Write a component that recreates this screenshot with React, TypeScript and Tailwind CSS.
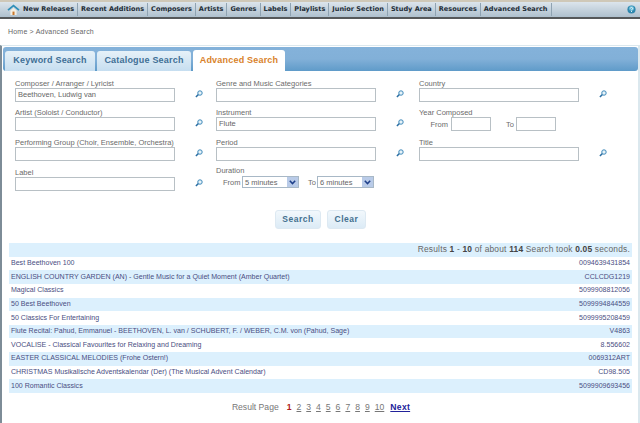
const NAV_ITEMS = [
  "New Releases",
  "Recent Additions",
  "Composers",
  "Artists",
  "Genres",
  "Labels",
  "Playlists",
  "Junior Section",
  "Study Area",
  "Resources",
  "Advanced Search",
];

const RESULTS = [
  ["Best Beethoven 100", "0094639431854"],
  ["ENGLISH COUNTRY GARDEN (AN) - Gentle Music for a Quiet Moment (Amber Quartet)", "CCLCDG1219"],
  ["Magical Classics", "5099908812056"],
  ["50 Best Beethoven", "5099994844559"],
  ["50 Classics For Entertaining", "5099995208459"],
  ["Flute Recital: Pahud, Emmanuel - BEETHOVEN, L. van / SCHUBERT, F. / WEBER, C.M. von (Pahud, Sage)", "V4863"],
  ["VOCALISE - Classical Favourites for Relaxing and Dreaming", "8.556602"],
  ["EASTER CLASSICAL MELODIES (Frohe Ostern!)", "0069312ART"],
  ["CHRISTMAS Musikalische Adventskalendar (Der) (The Musical Advent Calendar)", "CD98.505"],
  ["100 Romantic Classics", "5099909693456"],
];

const PAGES = ["2", "3", "4", "5", "6", "7", "8", "9", "10"];

const HomeIcon = () => (
  <svg width="13" height="12" viewBox="0 0 13 12" aria-hidden>
    <path d="M1 6.2 6.5 1.5 12 6.2" fill="none" stroke="#2f8fb8" strokeWidth="1.7" />
    <path d="M3.4 6.4 6.5 3.9 9.6 6.4V11H3.4Z" fill="#f4efe2" />
    <rect x="5.5" y="7.6" width="2" height="3.4" fill="#c9792e" />
  </svg>
);

const HelpIcon = () => (
  <svg width="9" height="9" viewBox="0 0 11 11" aria-hidden>
    <circle cx="5.5" cy="5.5" r="5" fill="#2d86ad" />
    <circle cx="5.5" cy="4" r="3.2" fill="#5fb4d2" />
    <path d="M4 4.2C4 2.6 7 2.6 7 4.1 7 5.2 5.5 5.1 5.5 6.4" fill="none" stroke="#fff" strokeWidth="1.1" />
    <rect x="5" y="7.3" width="1.1" height="1.2" fill="#fff" />
  </svg>
);

const LookupIcon = () => (
  <svg width="8" height="8" viewBox="0 0 9 9" className="mb-[2px] shrink-0" aria-hidden>
    <circle cx="5.6" cy="3.4" r="2.5" fill="#e8f3f8" stroke="#3a86b8" strokeWidth="1.1" />
    <path d="M3.7 5.2 1 7.9" stroke="#2a6ea3" strokeWidth="1.6" />
  </svg>
);

const Field = ({ label, value = "" }: { label: string; value?: string }) => (
  <div className="flex h-[29.7px] items-end">
    <div className="w-[160px] shrink-0">
      <div className="mb-[-1px] h-[11px] whitespace-nowrap text-[7.5px] leading-[11px] text-[#6b6b6b]">{label}</div>
      <div className="h-[14px] w-[160px] border border-[#b8c0c5] bg-white pl-[2px] text-[7.5px] leading-[12px] text-[#666]">
        {value}
      </div>
    </div>
    <div className="flex h-[14px] w-[41px] shrink-0 items-center pl-[20px]">
      <LookupIcon />
    </div>
  </div>
);

const Select = ({ value }: { value: string }) => (
  <div className="flex h-[12px] w-[57px] items-center justify-between border border-[#a8b8c6] bg-white pl-[2px] text-[7.5px] text-[#666]">
    {value}
    <span className="flex h-[10px] w-[11px] items-center justify-center bg-[#b9cbe8]">
      <svg width="7" height="5" viewBox="0 0 7 5" aria-hidden>
        <path d="M.8.8 3.5 3.6 6.2.8" fill="none" stroke="#1e3f8a" strokeWidth="1.5" />
      </svg>
    </span>
  </div>
);

const TabLabel = ({ label, active }: { label: string; active?: boolean }) => (
  <div
    className={
      active
        ? "flex h-[21px] w-[92px] items-center justify-center rounded-t-[3px] bg-white text-[9px] font-bold tracking-[0.2px] text-[#d9822b]"
        : "flex h-[20px] items-center justify-center rounded-t-[3px] bg-gradient-to-b from-[#e6f1f8] to-[#c6def0] text-[9px] font-bold tracking-[0.2px] text-[#3f6f96]"
    }
  >
    {label}
  </div>
);

const ActionButton = ({ label, width }: { label: string; width: string }) => (
  <div
    className={`flex h-[19px] ${width} items-center justify-center rounded-[3px] border border-[#dde9f2] bg-gradient-to-b from-[#f2f8fc] to-[#dcebf6] text-[8.5px] font-bold tracking-[0.5px] text-[#44708f]`}
  >
    {label}
  </div>
);

export default function App() {
  return (
    <div className="flex h-[423px] w-[640px] flex-col overflow-hidden bg-white font-['Liberation_Sans',sans-serif]">
      <div className="h-[2px] bg-[#cfc8b8]" />
      <nav className="flex h-[17px] shrink-0 items-center border-b-2 border-[#55585a] bg-gradient-to-b from-[#dce5ec] to-[#aec0ce] pl-[7px] pr-[3px] font-['DejaVu_Sans',sans-serif]">
        <div className="w-[13px] shrink-0">
          <HomeIcon />
        </div>
        <div className="flex items-center">
          {NAV_ITEMS.map((item) => (
            <span
              key={item}
              className="flex h-[13px] items-center whitespace-nowrap border-r border-[#8fa3b2] px-[3px] text-[6.55px] font-bold text-[#222c36]"
            >
              {item}
            </span>
          ))}
        </div>
        <div className="ml-auto mr-[1px]">
          <HelpIcon />
        </div>
      </nav>

      <div className="flex h-[26px] shrink-0 items-center pl-[8px] text-[7px] tracking-[0.2px] text-[#666]">
        Home &gt; Advanced Search
      </div>

      <main className="flex min-h-0 flex-1 flex-col border-l-2 border-r-2 border-t border-l-[#7d8c97] border-r-[#dbe8ee] border-t-[#dbe8ee] pl-[1px]">
        <div className="mt-[1px] flex h-[24px] shrink-0 items-end gap-[2px] rounded-[3px] bg-gradient-to-b from-[#84b2da] via-[#82b0d8] to-[#5f9bc9] pl-[2px]">
          <div className="w-[90px]">
            <TabLabel label="Keyword Search" />
          </div>
          <div className="w-[94px]">
            <TabLabel label="Catalogue Search" />
          </div>
          <TabLabel label="Advanced Search" active />
        </div>

        <form className="mt-[1px] grid grid-cols-[201px_203px_1fr] pl-[12px]">
          <Field label="Composer / Arranger / Lyricist" value="Beethoven, Ludwig van" />
          <Field label="Genre and Music Categories" />
          <Field label="Country" />
          <Field label="Artist (Soloist / Conductor)" />
          <Field label="Instrument" value="Flute" />
          <div className="flex h-[29.7px] flex-col justify-end text-[7.5px] text-[#6b6b6b]">
            <div className="mb-[-1px] h-[11px] leading-[11px]">Year Composed</div>
            <div className="flex h-[14px] items-center">
              <span className="w-[32px] pr-[3px] text-right">From</span>
              <div className="h-[14px] w-[40px] border border-[#b8c0c5]" />
              <span className="ml-[15px] w-[10px]">To</span>
              <div className="h-[14px] w-[40px] border border-[#b8c0c5]" />
            </div>
          </div>
          <Field label="Performing Group (Choir, Ensemble, Orchestra)" />
          <Field label="Period" />
          <Field label="Title" />
          <Field label="Label" />
          <div className="flex h-[29.7px] flex-col justify-end text-[7.5px] text-[#6b6b6b]">
            <div className="h-[11px] leading-[11px]">Duration</div>
            <div className="mb-[2px] flex h-[13px] items-center">
              <span className="ml-[7px] w-[19px]">From</span>
              <Select value="5 minutes" />
              <span className="ml-[9px] w-[9px]">To</span>
              <Select value="6 minutes" />
            </div>
          </div>
        </form>

        <div className="mt-[19px] flex justify-center gap-[6px]">
          <ActionButton label="Search" width="w-[46px]" />
          <ActionButton label="Clear" width="w-[39px]" />
        </div>

        <section className="ml-[6px] mr-[6px] mt-[14px] text-[7.05px] text-[#4a4e82]">
          <div className="flex h-[14px] items-center justify-end bg-[#dcf0fd] pr-[2px] text-[8.4px] tracking-[0.2px] text-[#666]">
            <span>
              Results <b className="text-[#444]">1</b> - <b className="text-[#444]">10</b> of about{" "}
              <b className="text-[#444]">114</b> Search took <b className="text-[#444]">0.05</b> seconds.
            </span>
          </div>
          {RESULTS.map(([title, code], i) => (
            <div
              key={code}
              className={`flex h-[13.6px] items-center justify-between px-[2px] ${
                i % 2 === 1 ? "bg-[#dcf0fd]" : "bg-white"
              }`}
            >
              <span className="whitespace-nowrap">{title}</span>
              <span className="whitespace-nowrap">{code}</span>
            </div>
          ))}
        </section>

        <div className="mt-[8px] flex items-center justify-center gap-[5px] pl-[1px] text-[8.6px] text-[#777]">
          <span className="mr-[3px]">Result Page</span>
          <b className="text-[#b01c20]">1</b>
          {PAGES.map((page) => (
            <span key={page} className="underline">
              {page}
            </span>
          ))}
          <b className="ml-[1px] tracking-[0.3px] text-[#22229a] underline">Next</b>
        </div>
      </main>
    </div>
  );
}
